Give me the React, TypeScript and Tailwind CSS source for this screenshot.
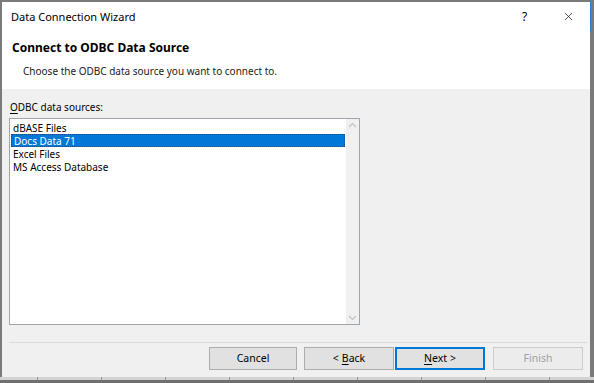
import { X } from "lucide-react";

const sources = ["dBASE Files", "Docs Data 71", "Excel Files", "MS Access Database"];
const ticks = [37, 101, 165, 229, 293, 357, 421, 485, 549];

function Button({
  children,
  variant = "normal",
}: {
  children: React.ReactNode;
  variant?: "normal" | "default" | "disabled";
}) {
  const cls =
    variant === "default"
      ? "border-2 border-[#0078d7] bg-[#e1e1e1] text-black"
      : variant === "disabled"
        ? "border border-[#cccccc] bg-[#ececec] text-[#a0a0a0]"
        : "border border-[#adadad] bg-[#e1e1e1] text-black";
  return (
    <div className={`flex h-[23px] w-[90px] items-center justify-center text-[10.5px] leading-none ${cls}`}>
      {children}
    </div>
  );
}

export default function App() {
  return (
    <div
      className="flex h-[383px] w-[594px] flex-col bg-[#7a7a7a]"
      style={{ fontFamily: '"Segoe UI", "Noto Sans", "Open Sans", sans-serif' }}
    >
      <div className="flex flex-1 pl-[2px] pt-[2px]">
        <div className="flex w-[588px] flex-col bg-[#f0f0f0]">
          {/* title bar + header */}
          <div className="h-[87px] bg-white">
            <div className="flex h-[29px] items-center pl-[9px]">
              <span className="text-[11px] leading-none text-black">Data Connection Wizard</span>
              <span className="ml-auto w-[12px] text-[12px] leading-none text-black">?</span>
              <X className="ml-[28px] mr-[15px] h-[13px] w-[13px] text-black" strokeWidth={1.2} />
            </div>
            <div className="pl-[10px] pt-[11px] text-[12px] font-bold leading-none text-black">
              Connect to ODBC Data Source
            </div>
            <div className="pl-[21px] pt-[12px] text-[10px] leading-none text-[#222]">
              Choose the ODBC data source you want to connect to.
            </div>
          </div>

          {/* body */}
          <div className="flex flex-1 flex-col px-[7px]">
            <div className="pl-[1px] pt-[13px] text-[10px] leading-none text-black">
              <span className="underline underline-offset-2">O</span>DBC data sources:
            </div>
            <div className="mt-[6px] flex h-[207px] w-[351px] border border-[#a0a4ab] bg-white">
              <div className="flex flex-1 flex-col pl-[1px] pt-[2px]">
                {sources.map((s, i) => (
                  <div
                    key={s}
                    className={`flex h-[13px] items-center overflow-hidden pl-[2px] text-[10px] leading-[12px] ${
                      i === 1
                        ? "border border-dotted border-[#1b4d82] bg-[#0078d7] pl-[1px] text-white"
                        : "text-black"
                    }`}
                  >
                    {s}
                  </div>
                ))}
              </div>
              <div className="ml-[1px] flex w-[13px] flex-col items-center justify-between bg-[#f0f0f0] py-[3px]">
                <svg width="9" height="6" viewBox="0 0 9 6" fill="none">
                  <path d="M1 5 L4.5 1.5 L8 5" stroke="#c2c2c2" strokeWidth="1.2" />
                </svg>
                <svg width="9" height="6" viewBox="0 0 9 6" fill="none">
                  <path d="M1 1 L4.5 4.5 L8 1" stroke="#c2c2c2" strokeWidth="1.2" />
                </svg>
              </div>
            </div>
            <div className="mt-[17px] h-px w-[578px] bg-[#dadada]" />
            <div className="mt-[4px] flex pl-[200px]">
              <Button>Cancel</Button>
              <div className="ml-[7px]">
                <Button>
                  &lt; <span className="ml-[3px] underline underline-offset-2">B</span>ack
                </Button>
              </div>
              <div className="ml-[1px]">
                <Button variant="default">
                  <span className="underline underline-offset-2">N</span>ext &gt;
                </Button>
              </div>
              <div className="ml-[8px]">
                <Button variant="disabled">Finish</Button>
              </div>
            </div>
          </div>
        </div>
        <div className="flex w-[4px] flex-col">
          <div className="h-[29px] w-px bg-[#2b79d0]" />
        </div>
      </div>
      <div className="relative h-[3px] bg-[#d2d2d2]">
        {ticks.map((x) => (
          <div key={x} className="absolute top-0 h-[3px] w-px bg-[#9a9a9a]" style={{ left: x }} />
        ))}
      </div>
      <div className="h-[3px] bg-[#6f6f6f]" />
    </div>
  );
}
